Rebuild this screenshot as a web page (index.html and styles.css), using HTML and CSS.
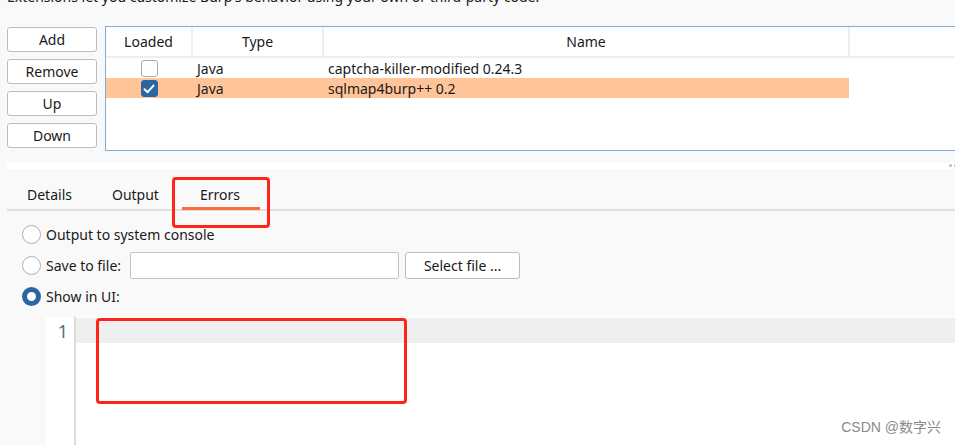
FILE: index.html
```html
<!DOCTYPE html>
<html lang="en">
<head>
    <meta charset="UTF-8">
    <title>Extensions</title>
    <link rel="stylesheet" href="styles.css">
</head>
<body>
    <p class="intro">Extensions let you customize Burp's behavior using your own or third-party code.</p>

    <div class="top">
        <!-- botones de la lista -->
        <div class="side-buttons">
            <button class="btn">Add</button>
            <button class="btn">Remove</button>
            <button class="btn">Up</button>
            <button class="btn">Down</button>
        </div>

        <div class="ext-table">
            <table>
                <thead>
                    <tr>
                        <th class="col-loaded">Loaded</th>
                        <th class="col-type">Type</th>
                        <th class="col-name">Name</th>
                        <th class="col-rest"></th>
                    </tr>
                </thead>
                <tbody>
                    <tr>
                        <td class="center"><span class="check"></span></td>
                        <td>Java</td>
                        <td>captcha-killer-modified 0.24.3</td>
                        <td class="blank"></td>
                    </tr>
                    <tr class="selected">
                        <td class="center">
                            <span class="check on">
                                <svg width="12" height="10" viewBox="0 0 12 10"><path d="M1.5 5.2 L4.6 8.2 L10.5 1.6" fill="none" stroke="#fff" stroke-width="2" stroke-linecap="round" stroke-linejoin="round"/></svg>
                            </span>
                        </td>
                        <td>Java</td>
                        <td>sqlmap4burp++ 0.2</td>
                        <td class="blank"></td>
                    </tr>
                </tbody>
            </table>
        </div>
    </div>

    <div class="divider"><span class="dots"></span></div>

    <div class="tabs">
        <div class="tab">Details</div>
        <div class="tab">Output</div>
        <div class="tab active">Errors</div>
    </div>

    <div class="options">
        <div class="opt-row">
            <span class="radio"></span>
            <span>Output to system console</span>
        </div>
        <div class="opt-row">
            <span class="radio"></span>
            <span>Save to file:</span>
            <input class="file-field" type="text">
            <button class="btn btn-file">Select file ...</button>
        </div>
        <div class="opt-row">
            <span class="radio on"></span>
            <span>Show in UI:</span>
        </div>
    </div>

    <div class="editor">
        <div class="gutter"><span class="line-no">1</span></div>
        <div class="code">
            <div class="current-line"></div>
        </div>
    </div>

    <!-- marcas rojas de la captura -->
    <div class="mark mark-tab"></div>
    <div class="mark mark-editor"></div>

    <div class="watermark">CSDN @数字兴</div>
</body>
</html>
```

FILE: styles.css
```css
body {
    margin: 0;
    background: #f9f9f9;
    font-family: "Noto Sans", "Open Sans", sans-serif;
    font-size: 14px;
    color: #1a1a1a;
    height: 445px;
    overflow: hidden;
    position: relative;
}

.intro {
    margin: -11px 0 0 7px;
    height: 37px;
    line-height: 16px;
    white-space: nowrap;
}

.top {
    display: flex;
    gap: 8px;
    padding-left: 7px;
}

.side-buttons {
    display: flex;
    flex-direction: column;
    gap: 7px;
    width: 90px;
    padding-top: 1px;
}

.btn {
    background: #fff;
    border: 1px solid #bcbcbc;
    border-radius: 3px;
    font-family: inherit;
    font-size: 14px;
    color: #1a1a1a;
    height: 25px;
    padding: 0;
}

.ext-table {
    flex: 1;
    height: 123px;
    background: #fff;
    border: 1px solid #84abd3;
    border-right: none;
}

table {
    border-collapse: collapse;
    table-layout: fixed;
    width: 100%;
}

th {
    height: 29px;
    font-weight: normal;
    text-align: center;
    border-right: 2px solid #eeeeee;
    border-bottom: 2px solid #eeeeee;
    padding: 0;
}

th.col-rest {
    border-right: none;
}

.col-loaded { width: 85px; }
.col-type { width: 129px; }
.col-name { width: 524px; }

td {
    height: 20px;
    padding: 0 0 0 5px;
    white-space: nowrap;
}

td.center {
    padding: 0;
    text-align: center;
}

tr.selected td {
    background: #ffc599;
}

tr.selected td.blank {
    background: #fff;
}

.check {
    display: inline-block;
    box-sizing: border-box;
    width: 17px;
    height: 17px;
    border: 1px solid #aaaaaa;
    border-radius: 3px;
    background: #fff;
    vertical-align: middle;
    position: relative;
    top: -1px;
}

.check.on {
    background: #2b66a3;
    border-color: #2b66a3;
}

.check svg {
    display: block;
    margin: 3px 0 0 1px;
}

.divider {
    margin: 12px 0 0 7px;
    height: 6px;
    background: #fff;
    position: relative;
}

.dots {
    position: absolute;
    right: 3px;
    top: 1px;
    width: 3px;
    height: 3px;
    border-radius: 50%;
    background: #bbb;
    box-shadow: 5px 0 0 #bbb;
}

.tabs {
    display: flex;
    margin-left: 7px;
    border-bottom: 2px solid #dfdfdf;
    height: 40px;
}

.tab {
    padding: 16px 20px 0;
    line-height: 20px;
    position: relative;
}

.tab.active {
    padding: 16px 20px 0 21px;
}

.tab.active::after {
    content: "";
    position: absolute;
    left: 3px;
    right: 0;
    bottom: -1px;
    height: 3px;
    background: #ff6b3d;
}

.options {
    padding: 13px 0 0 22px;
    display: flex;
    flex-direction: column;
    gap: 11px;
}

.opt-row {
    display: flex;
    align-items: center;
    gap: 5px;
    height: 20px;
}

.radio {
    box-sizing: border-box;
    width: 19px;
    height: 19px;
    border-radius: 50%;
    border: 1px solid #b0b0b0;
    background: #fff;
}

.radio.on {
    border: 5px solid #2b66a3;
}

.file-field {
    box-sizing: border-box;
    width: 269px;
    height: 27px;
    margin-left: 4px;
    border: 1px solid #c4c4c4;
    border-radius: 2px;
    background: #fff;
}

.btn-file {
    width: 115px;
    height: 27px;
    margin-left: 1px;
}

.editor {
    display: flex;
    margin: 11px 0 0 46px;
    height: 130px;
}

.gutter {
    width: 28px;
    background: #fff;
    border-right: 2px solid #dcdcdc;
    text-align: right;
}

.line-no {
    display: block;
    padding: 1px 6px 0 0;
    font-size: 18px;
    line-height: 26px;
    color: #5c6f80;
}

.code {
    flex: 1;
    background: #fff;
    padding-top: 1px;
}

.current-line {
    height: 25px;
    background: #efefef;
}

.mark {
    position: absolute;
    border: 3px solid #ff2318;
    border-radius: 4px;
}

.mark-tab {
    left: 172px;
    top: 177px;
    width: 92px;
    height: 45px;
}

.mark-editor {
    left: 96px;
    top: 318px;
    width: 305px;
    height: 80px;
}

.watermark {
    position: absolute;
    right: 14px;
    bottom: 9px;
    font-family: "Liberation Sans", "Noto Sans CJK SC", sans-serif;
    font-size: 14px;
    color: #8a8a8a;
}
```
